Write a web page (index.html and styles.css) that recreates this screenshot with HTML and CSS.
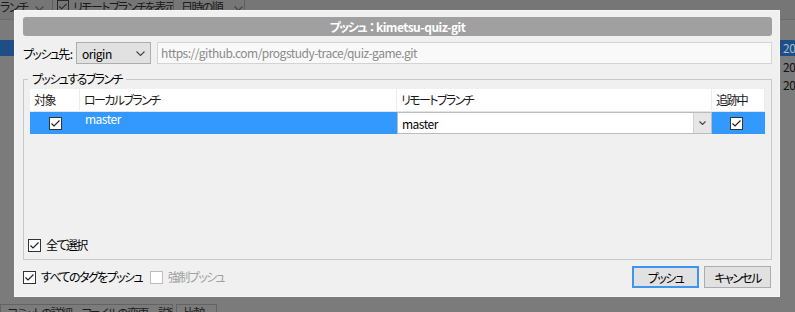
FILE: index.html
```html
<!DOCTYPE html>
<html lang="ja">
<head>
  <meta charset="UTF-8" />
  <title>プッシュ</title>
  <link rel="stylesheet" href="styles.css">
</head>
<body>
  <div class="app">
    <div class="toolbar">
      <div class="tb-item tb-first">ランチ <svg class="chev" width="9" height="5" viewBox="0 0 9 5"><polyline points="0.5,0.5 4.5,4.5 8.5,0.5"/></svg></div>
      <div class="tb-item tb-second"><span class="tb-chk"><svg width="11" height="11" viewBox="0 0 11 11"><polyline points="1.5,5.5 4,8 9.5,2.5"/></svg></span>リモートブランチを表示</div>
      <div class="tb-item tb-third">日時の順 <svg class="chev" width="9" height="5" viewBox="0 0 9 5"><polyline points="0.5,0.5 4.5,4.5 8.5,0.5"/></svg></div>
    </div>
    <div class="app-list">
      <div class="app-row app-row-sel"><span class="app-date latin">2023/05/10 21:04</span></div>
      <div class="app-row"><span class="app-date latin">2023/05/09 18:22</span></div>
      <div class="app-row"><span class="app-date latin">2023/05/08 23:41</span></div>
    </div>
    <div class="app-tabs">
      <div class="app-tab tab-main">コミットの詳細　ファイルの変更　説明</div>
      <div class="app-tab tab-small">比較</div>
    </div>
  </div>

  <div class="dialog">
    <div class="dlg-title">プッシュ<span class="colon">：</span><span class="latin">kimetsu-quiz-git</span></div>

    <div class="dest-row">
      <span class="dest-label">プッシュ先<span class="colon-half">:</span></span>
      <div class="combo">
        <span class="latin">origin</span>
        <svg class="chev" width="9" height="5" viewBox="0 0 9 5"><polyline points="0.5,0.5 4.5,4.5 8.5,0.5"/></svg>
      </div>
      <div class="url-box latin">https://github.com/progstudy-trace/quiz-game.git</div>
    </div>

    <fieldset class="group">
      <legend>プッシュするブランチ</legend>
      <div class="branch-grid">
        <div class="gh">対象</div>
        <div class="gh">ローカルブランチ</div>
        <div class="gh">リモートブランチ</div>
        <div class="gh">追跡中</div>

        <div class="gc gc-center">
          <span class="chk"><svg width="11" height="11" viewBox="0 0 11 11"><polyline points="1.5,5.5 4,8 9.5,2.5"/></svg></span>
        </div>
        <div class="gc gc-local latin">master</div>
        <div class="gc">
          <div class="cell-combo">
            <span class="cell-combo-text latin">master</span>
            <span class="cell-combo-btn"><svg class="chev" width="7" height="4" viewBox="0 0 7 4"><polyline points="0.5,0.5 3.5,3.5 6.5,0.5"/></svg></span>
          </div>
        </div>
        <div class="gc gc-track">
          <span class="chk"><svg width="11" height="11" viewBox="0 0 11 11"><polyline points="1.5,5.5 4,8 9.5,2.5"/></svg></span>
        </div>
      </div>

      <label class="check-line select-all">
        <span class="chk"><svg width="11" height="11" viewBox="0 0 11 11"><polyline points="1.5,5.5 4,8 9.5,2.5"/></svg></span>全て選択
      </label>
    </fieldset>

    <div class="footer">
      <label class="check-line">
        <span class="chk"><svg width="11" height="11" viewBox="0 0 11 11"><polyline points="1.5,5.5 4,8 9.5,2.5"/></svg></span>すべてのタグをプッシュ
      </label>
      <label class="check-line disabled">
        <span class="chk chk-off"></span>強制プッシュ
      </label>
      <div class="buttons">
        <button class="btn btn-default">プッシュ</button>
        <button class="btn">キャンセル</button>
      </div>
    </div>
  </div>
</body>
</html>
```

FILE: styles.css
```css
body {
  margin: 0;
  width: 795px;
  height: 312px;
  overflow: hidden;
  position: relative;
  background: #7b7b7b;
  font-family: "Noto Sans CJK JP", "Noto Sans", sans-serif;
  font-size: 12px;
  font-feature-settings: "palt";
  letter-spacing: -1.6px;
  color: #000;
}

.latin {
  letter-spacing: -0.5px;
}

/* アプリ本体（ダイアログの後ろ、暗くなっている） */
.app {
  display: flex;
  flex-direction: column;
  height: 312px;
}

.toolbar {
  height: 20px;
  display: flex;
  background: #767676;
  border-bottom: 1px solid #6b6b6b;
  box-sizing: border-box;
  color: #1b1b1b;
  line-height: 14px;
}

.tb-item {
  display: flex;
  align-items: flex-start;
  gap: 4px;
  box-sizing: border-box;
  border-right: 1px solid #5e5e5e;
  white-space: nowrap;
  overflow: hidden;
}

.tb-first {
  width: 53px;
  gap: 8px;
}

.tb-second {
  width: 121px;
  padding-left: 4px;
}

.tb-third {
  width: 71px;
  padding-left: 7px;
  gap: 12px;
}

.tb-item .chev {
  margin-top: 6px;
}

.tb-chk {
  width: 12px;
  height: 12px;
  flex: none;
  box-sizing: border-box;
  border: 1px solid #262626;
  display: flex;
  align-items: center;
  justify-content: center;
}

.tb-chk svg polyline {
  fill: none;
  stroke: #262626;
  stroke-width: 1.2;
}

.app-list {
  flex: 1;
  padding-top: 20px;
}

.app-row {
  height: 18px;
  line-height: 18px;
  display: flex;
  justify-content: flex-end;
}

.app-date {
  width: 12px;
  white-space: nowrap;
  color: #111;
}

.app-row-sel {
  height: 16px;
  line-height: 16px;
  margin-bottom: 2px;
  background: #1d4e85;
}

.app-row-sel .app-date {
  color: #a8bbd0;
}

.app-tabs {
  height: 15px;
  padding-top: 7px;
  box-sizing: border-box;
  display: flex;
  gap: 3px;
}

.app-tab {
  border: 1px solid #636363;
  border-bottom: none;
  padding: 1px 6px 0;
  line-height: 14px;
  color: #1b1b1b;
  white-space: nowrap;
  overflow: hidden;
  box-sizing: border-box;
}

.tab-main {
  width: 173px;
}

.tab-small {
  width: 41px;
}

/* プッシュダイアログ */
.dialog {
  position: absolute;
  left: 14px;
  top: 10px;
  width: 766px;
  height: 287px;
  box-sizing: border-box;
  padding: 6px 7px 8px 8px;
  background: #f0f0f0;
  border: 1px solid #f6f6f6;
  display: flex;
  flex-direction: column;
}

.dlg-title {
  height: 19px;
  line-height: 19px;
  background: #a0a0a0;
  border-radius: 3px;
  color: #fff;
  font-weight: bold;
  text-align: center;
}

.dlg-title .colon {
  font-feature-settings: normal;
  letter-spacing: -2px;
}

.chev polyline {
  fill: none;
  stroke: #444;
  stroke-width: 1.1;
}

.dest-row {
  margin-top: 6px;
  height: 22px;
  display: flex;
  align-items: center;
}

.dest-label {
  flex: none;
  white-space: nowrap;
  margin-right: 3px;
}

.dest-label .colon-half {
  letter-spacing: 0;
  margin-left: 1px;
}

.combo {
  width: 75px;
  flex: none;
  height: 22px;
  box-sizing: border-box;
  border: 1px solid #adadad;
  background: #e1e1e1;
  display: flex;
  align-items: center;
  justify-content: space-between;
  padding: 0 5px 0 5px;
}

.url-box {
  flex: 1;
  margin-left: 6px;
  height: 22px;
  box-sizing: border-box;
  border: 1px solid #d4d4d4;
  background: #f9f9f9;
  color: #8a8a8a;
  padding-left: 3px;
  line-height: 20px;
}

.group {
  flex: 1;
  min-height: 0;
  min-width: 0;
  margin: 8px 0 0;
  padding: 3px 6px 7px;
  border: 1px solid #c9c9c9;
  display: flex;
  flex-direction: column;
  box-sizing: border-box;
}

.group legend {
  padding: 0 4px;
  margin-left: -2px;
  line-height: 14px;
}

.branch-grid {
  display: grid;
  grid-template-columns: 50px 317px 315px 53px;
  grid-template-rows: 23px 22px;
}

.gh {
  background: #fff;
  border-bottom: 1px solid #e4e4e4;
  border-right: 1px solid #ececec;
  padding-left: 4px;
  line-height: 22px;
  color: #1a1a1a;
}

.gh:last-child {
  border-right: none;
}

.gc {
  background: #3399ff;
  height: 22px;
  display: flex;
  align-items: center;
}

.gc-center {
  justify-content: center;
}

.gc-local {
  align-items: flex-start;
  padding-left: 5px;
  line-height: 14px;
  color: #fff;
}

.gc-track {
  padding-left: 18px;
}

.cell-combo {
  flex: 1;
  height: 22px;
  box-sizing: border-box;
  background: #fff;
  border: 1px solid #bcbcbc;
  display: flex;
  align-items: center;
}

.cell-combo-text {
  flex: 1;
  padding-left: 4px;
}

.cell-combo-btn {
  width: 17px;
  height: 20px;
  background: #e6e6e6;
  border-left: 1px solid #d2d2d2;
  display: flex;
  align-items: center;
  justify-content: center;
}

.chk {
  width: 13px;
  height: 13px;
  flex: none;
  box-sizing: border-box;
  border: 1px solid #333;
  background: #fff;
  display: flex;
  align-items: center;
  justify-content: center;
}

.chk svg polyline {
  fill: none;
  stroke: #222;
  stroke-width: 1.2;
}

.chk-off {
  border-color: #bcbcbc;
}

.check-line {
  display: flex;
  align-items: center;
  gap: 5px;
  line-height: 14px;
}

.select-all {
  margin-top: auto;
  margin-left: -2px;
}

.footer {
  margin-top: 6px;
  height: 22px;
  display: flex;
  align-items: center;
}

.footer .disabled {
  margin-left: 8px;
  color: #a0a0a0;
}

.buttons {
  margin-left: auto;
  margin-right: 1px;
  display: flex;
  gap: 5px;
}

.btn {
  width: 67px;
  height: 22px;
  padding: 0;
  font: inherit;
  letter-spacing: -1.6px;
  color: #000;
  background: #e1e1e1;
  border: 1px solid #adadad;
}

.btn-default {
  border: 2px solid #3d95ee;
}
```
